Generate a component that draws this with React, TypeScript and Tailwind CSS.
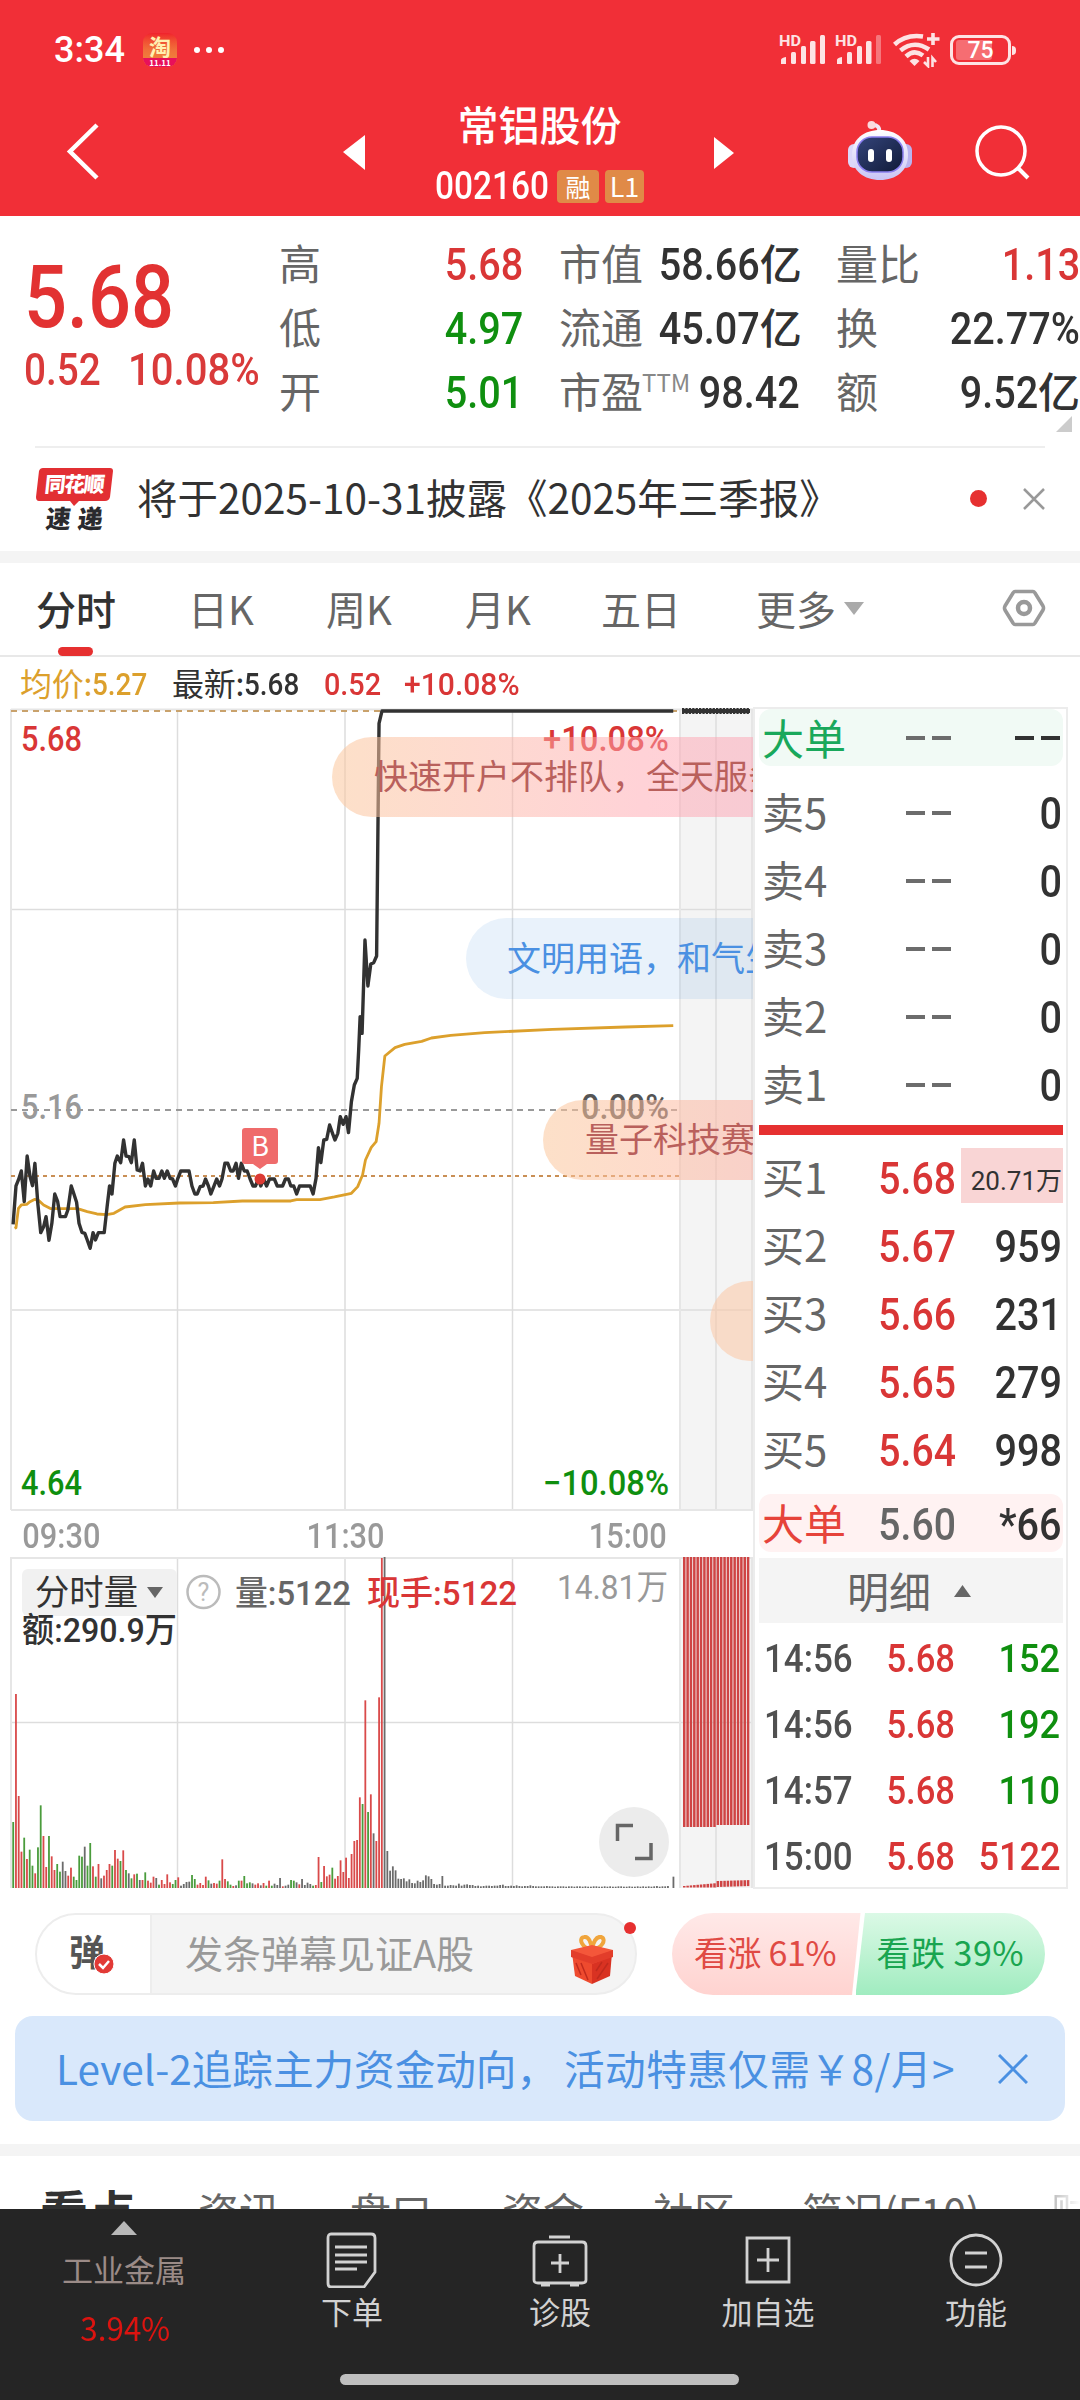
import type { ReactNode } from 'react';
import clsx from 'clsx';

const UP = '#d93636';
const DOWN = '#0f8f0f';

// price and average lines, x: plot units, y: plot units relative to the lower half
const PRICE_LINE =
  '27,493 33,378 38,360 44,333 50,425 56,288 62,350 67,377 72,310 78,430 84,518 90,500 95,470 101,541 107,490 113,402 119,425 124,470 135,470 140,450 147,378 152,400 158,427 163,490 169,517 175,520 180,540 186,565 192,518 197,540 203,518 215,518 221,440 226,378 231,402 237,310 242,288 249,308 255,240 260,288 266,290 271,308 277,240 283,330 289,333 294,310 300,378 305,357 311,378 317,333 322,355 328,355 334,333 339,355 345,333 351,355 356,357 362,378 367,355 373,333 390,333 396,378 402,402 407,402 413,380 419,378 424,357 430,378 435,402 441,380 447,357 453,378 458,357 464,310 470,310 476,333 481,333 487,310 492,355 498,310 504,333 510,333 516,357 522,378 527,378 533,357 538,378 544,357 550,378 556,357 566,357 572,378 583,378 589,357 595,357 600,378 606,378 612,402 618,378 640,378 646,402 652,355 657,263 662,308 668,240 674,238 680,195 686,220 691,240 697,220 702,170 708,193 714,170 719,218 725,125 731,75 737,55 740,-30 743,-130 747,-80 753,-360 759,-222 765,-288 771,-292 777,-312 782,-1010 788,-1047 1389,-1047';

const AVG_LINE =
  '30,505 33,503 38,445 44,435 55,433 62,425 72,418 80,422 90,435 105,446 160,446 180,455 200,462 220,464 235,460 258,441 300,434 370,429 440,428 500,423 600,423 612,419 660,419 690,411 725,400 738,380 748,345 754,300 766,262 776,245 782,190 787,80 794,-12 815,-37 835,-47 870,-56 890,-66 930,-74 1000,-82 1140,-92 1290,-99 1389,-103';

// one entry per minute: r = up, g = down, k = flat
const VOLUME =
  'g198 r582 r276 r109 g151 r87 g115 g67 r44 g122 g248 r156 r63 g156 r95 r54 g72 g49 k79 k51 r37 r61 g34 g24 g97 g94 k124 g67 g135 r65 g34 r72 k29 r37 r54 r72 g67 r114 r88 g81 r113 g54 k44 g29 r41 g43 k24 r24 g47 r22 r16 r34 k30 g10 r24 r12 r41 r17 g12 g24 r32 k7 k12 k18 k19 g39 g27 r10 r15 r9 r34 g23 k13 r15 r13 g22 r86 r27 g20 g10 r6 k8 g22 r22 g36 g14 g17 k14 r10 r14 k8 r15 g7 r22 g7 k13 k9 k30 r5 k7 k10 g24 g22 k17 r11 k27 k9 k16 k12 g7 r9 r93 g18 r66 r35 r40 g61 r28 r36 r83 r48 r91 r30 r102 r141 r144 r272 g252 r563 g228 r281 k164 r141 r572 r990 k993 k111 k52 k65 k53 k28 k27 k29 k20 k26 k15 k14 k22 k18 k23 k38 k35 k27 k12 k10 k12 k36 k7 k7 k9 k8 k7 k13 k7 k10 k11 k9 k9 k6 k7 k5 k6 k7 k7 k6 k7 k7 k9 k10 k6 k6 k7 k6 k8 k6 k5 k6 k6 k8 k6 k5 k5 k5 k5 k6 k5 k5 k4 k5 k5 k5 k4 k5 k5 k4 k5 k5 k4 k5 k4 k4 k5 k5 k4 k4 k5 k4 k5 k4 k4 k5 k5 k4 k4 k5 k4 k4 k5 k4 k5 k4 k5 k4 k5 k6 k4 k5 k5 k6 k0 k34';

const BAR_COLOR: Record<string, string> = { r: '#d94a4a', g: '#4a9c3c', k: '#6b6b6b' };

const sells = ['卖5', '卖4', '卖3', '卖2', '卖1'];
const buys = [
  ['买1', '5.68', '20.71万'],
  ['买2', '5.67', '959'],
  ['买3', '5.66', '231'],
  ['买4', '5.65', '279'],
  ['买5', '5.64', '998'],
];
const trades = [
  { time: '14:56', price: '5.68', vol: '152', up: false },
  { time: '14:56', price: '5.68', vol: '192', up: false },
  { time: '14:57', price: '5.68', vol: '110', up: false },
  { time: '15:00', price: '5.68', vol: '5122', up: true },
];

function Num({ children, className }: { children: ReactNode; className?: string }) {
  return (
    <span className={clsx("inline-block whitespace-pre [font-family:Roboto,'Noto_Sans_CJK_SC',sans-serif] font-medium", className)}>
      {children}
    </span>
  );
}

function Signal({ weak }: { weak?: boolean }) {
  return (
    <svg width="46" height="34" viewBox="0 0 46 34" fill="#fde3e4">
      <text x="0" y="13" fontSize="15" fontWeight="700" fontFamily="Roboto" textLength="22" lengthAdjust="spacingAndGlyphs">HD</text>
      <path d="M2 31 V27 Q2 25 7 24 V31 Z" />
      <rect x="12" y="19" width="5" height="12" rx="1.500" />
      <rect x="22" y="13" width="5" height="18" rx="1.500" />
      <rect x="31" y="8" width="5.500" height="23" rx="1.500" />
      <rect x="41" y="2" width="5" height="29" rx="1.500" opacity={weak ? 0.4 : 1} />
    </svg>
  );
}

function StatusBar() {
  return (
    <div className="flex h-[100px] items-center pl-[54px] pr-[69px] text-white">
      <Num className="w-[89px] text-[36px] leading-none">3:34</Num>
      <div className="flex h-[34px] w-[34px] flex-col items-center rounded-[9px] bg-gradient-to-b from-[#f0202c] via-[#f0703a] to-[#ef8a3c]">
        <span className="h-[25px] text-[22px] font-bold leading-[25px] text-[#fff0b0]">淘</span>
        <span className="h-[9px] w-full rounded-b-[9px] bg-[#e8105a] text-center text-[8px] font-bold leading-[9px]">11.11</span>
      </div>
      <div className="ml-[17px] flex gap-[6px]">
        <i className="size-[6px] rounded-full bg-white" />
        <i className="size-[6px] rounded-full bg-white" />
        <i className="size-[6px] rounded-full bg-white" />
      </div>
      <div className="ml-auto flex items-center">
        <Signal />
        <div className="ml-[10px]"><Signal weak /></div>
        <svg className="ml-[12px]" width="48" height="36" viewBox="0 0 48 36" fill="none" stroke="#fde3e4" strokeWidth="4.6">
          <path d="M1.500 12.500 Q13 2 30 4.500" />
          <path d="M7.500 18.500 Q21 7.500 36 17.500" />
          <path d="M13 24.500 Q21 17 30 23.500" />
          <path d="M21.500 34 L16.500 29 Q21.500 24.500 26.500 29 Z" fill="#fde3e4" stroke="none" />
          <path d="M40 1 V13 M34 7 H46.500" strokeWidth="3.6" />
          <path d="M35 25 V34 L31 30 M39.500 35 V26 L43 30" strokeWidth="2.600" />
        </svg>
        <div className="relative ml-[9px] flex h-[30px] w-[61px] items-center justify-center rounded-[9px] border-[3px] border-[#fde3e4]">
          <div className="absolute bottom-[2px] left-[3px] top-[2px] w-[36px] rounded-[3px] bg-[#f66d72]" />
          <Num className="relative text-[23px] leading-none">75</Num>
          <i className="absolute -right-[8px] h-[9px] w-[4px] rounded-r bg-[#fde3e4]" />
        </div>
      </div>
    </div>
  );
}

function Robot() {
  return (
    <svg width="64" height="62" viewBox="0 0 64 62">
      <defs>
        <linearGradient id="head" x1="0" y1="0" x2="0" y2="1">
          <stop offset="0" stopColor="#fff" />
          <stop offset="1" stopColor="#c9c4f5" />
        </linearGradient>
        <linearGradient id="face" x1="0" y1="0" x2="1" y2="1">
          <stop offset="0" stopColor="#34447a" />
          <stop offset="1" stopColor="#101a38" />
        </linearGradient>
      </defs>
      <path d="M31 12 C32 7 29 5 25 5" fill="none" stroke="#f3e4f4" strokeWidth="4" />
      <circle cx="23.500" cy="5" r="4" fill="#fbd9de" />
      <rect x="0" y="24" width="12" height="24" rx="6" fill="#dcd8fa" />
      <rect x="52" y="24" width="12" height="24" rx="6" fill="#b9b4ef" />
      <path d="M32 10 C48 10 60 19 60 35 C60 51 48 60 32 60 C16 60 4 51 4 35 C4 19 16 10 32 10 Z" fill="url(#head)" />
      <rect x="9" y="17" width="46" height="35" rx="15" fill="url(#face)" stroke="#8b7ff0" strokeWidth="1.500" />
      <rect x="20" y="29" width="6" height="13" rx="3" fill="#fff" />
      <rect x="38" y="29" width="6" height="13" rx="3" fill="#fff" />
    </svg>
  );
}

function NavBar() {
  return (
    <div className="flex h-[116px] items-start text-white">
      <div className="flex w-[343px] pl-[66px] pt-[22px]">
        <svg width="34" height="58" viewBox="0 0 34 58" fill="none" stroke="#fff" strokeWidth="4.5">
          <path d="M31 3 L4 29.500 L31 56" />
        </svg>
      </div>
      <svg className="mt-[34px]" width="22" height="36" viewBox="0 0 22 36" fill="#fff"><path d="M22 1 V36 L0 18 Z" /></svg>
      <div className="flex w-[349px] flex-col items-center">
        <div className="h-[68px] text-[41px] font-medium leading-[46px]">常铝股份</div>
        <div className="flex h-[36px] items-center">
          <Num className="w-[122px] origin-left scale-x-[.88] text-[38px] leading-none">002160</Num>
          <span className="flex h-[33px] w-[42px] items-center justify-center rounded-[4px] bg-[#e08a47] text-[25px] leading-[30px]">融</span>
          <span className="ml-[6px] flex h-[33px] w-[39px] items-center justify-center rounded-[4px] bg-[#e08a47] text-[27px] leading-[30px]">L1</span>
        </div>
      </div>
      <svg className="mt-[36px]" width="20" height="34" viewBox="0 0 20 34" fill="#fff"><path d="M0 1 V33 L20 17 Z" /></svg>
      <div className="ml-[114px] mt-[20px]"><Robot /></div>
      <svg className="ml-[62px] mt-[24px]" width="56" height="58" viewBox="0 0 56 58" fill="none" stroke="#fff" strokeWidth="3.500">
        <circle cx="27" cy="27" r="24" />
        <path d="M44 44 L54 54" strokeWidth="4" />
      </svg>
    </div>
  );
}

function Stat({ label, sup, value, unit, color }: { label: string; sup?: string; value: string; unit?: string; color?: string }) {
  return (
    <div className="flex h-[64px] items-center whitespace-nowrap text-[42px] leading-[60px]">
      <span className="relative -left-[2px] -top-[2px] text-[#666]">{label}</span>
      {sup && <span className="-ml-[3px] mb-[20px] w-[40px] text-[24px] leading-none text-[#888]">{sup}</span>}
      <span className={clsx('ml-auto flex items-center', color ?? 'text-[#323232]')}>
        <Num className="origin-right scale-x-[.88] text-[45px] leading-none">{value}</Num>
        {unit && <span className="relative -top-[2px] font-medium">{unit}</span>}
      </span>
    </div>
  );
}

function Quote() {
  return (
    <div className="flex h-[230px] shrink-0 pt-[16px]">
      <div className="w-[281px] shrink-0 pl-[24px] text-[#e23232]">
        <Num className="mt-[21px] block origin-left scale-x-[.86] text-[88px] leading-[88px]">5.68</Num>
        <div className="mt-[7px] flex text-[#d93a3a]">
          <Num className="w-[104px] origin-left scale-x-[.88] text-[44px] leading-[44px]">0.52</Num>
          <Num className="origin-left scale-x-[.91] text-[44px] leading-[44px]">10.08%</Num>
        </div>
      </div>
      <div className="grid h-[192px] grid-cols-[242px_239px_242px] gap-x-[38px]">
        <Stat label="高" value="5.68" color="text-[#d93636]" />
        <Stat label="市值" value="58.66" unit="亿" />
        <Stat label="量比" value="1.13" color="text-[#d93636]" />
        <Stat label="低" value="4.97" color="text-[#0f8f0f]" />
        <Stat label="流通" value="45.07" unit="亿" />
        <Stat label="换" value="22.77%" />
        <Stat label="开" value="5.01" color="text-[#0f8f0f]" />
        <Stat label="市盈" sup="TTM" value="98.42" />
        <Stat label="额" value="9.52" unit="亿" />
      </div>
      <svg className="absolute right-[8px] top-[416px]" width="16" height="16"><path d="M16 0 V16 H0 Z" fill="#ccc" /></svg>
    </div>
  );
}

function Notice() {
  return (
    <div className="mx-[35px] flex h-[105px] shrink-0 items-center border-t-2 border-[#eee] pb-[2px]">
      <svg className="overflow-visible" width="80" height="66" viewBox="35 465 80 66" fontFamily="Noto Sans CJK SC" fontWeight="900">
        <path d="M43 467 H110 Q113 467 113 470 L110 496 Q109 500 105 500 H79 L74 505 L70 500 H39 Q36 500 36 496 L39 470 Q40 467 43 467 Z" fill="#e22f33" />
        <text x="0" y="0" transform="translate(44 491) skewX(-6)" fontSize="21" fill="#fff" textLength="60">同花顺</text>
        <text x="0" y="0" transform="translate(45 527) skewX(-6)" fontSize="25" fill="#2a2a2e" textLength="57">速递</text>
      </svg>
      <span className="relative -top-[2px] ml-[22px] whitespace-nowrap text-[40.500px] leading-[60px] text-[#323232]">将于2025-10-31披露《2025年三季报》</span>
      <i className="ml-auto size-[17px] rounded-full bg-[#e63030]" />
      <svg className="ml-[36px]" width="22" height="22" stroke="#999" strokeWidth="2.500"><path d="M1 1 L21 21 M21 1 L1 21" /></svg>
    </div>
  );
}

function PeriodTabs() {
  return (
    <div className="relative flex h-[94px] shrink-0 items-center border-b-2 border-[#e8e8e8] pb-[2px] text-[40px] leading-[60px] text-[#666]">
      <span className="w-[157px] pl-[36px] font-medium text-[#323232]">分时</span>
      <span className="ml-[31px] w-[138px]">日K</span>
      <span className="w-[139px]">周K</span>
      <span className="w-[136px]">月K</span>
      <span className="w-[155px]">五日</span>
      <span>更多</span>
      <svg className="ml-[8px]" width="20" height="13"><path d="M0 0 H20 L10 13 Z" fill="#aaa" /></svg>
      <svg className="ml-auto mr-[34px]" width="44" height="38" viewBox="0 0 44 38" fill="none" stroke="#999" strokeWidth="3.600">
        <path d="M13 2.500 H31 Q32 2.500 33 4 L41 17 Q42 19 41 21 L33 34 Q32 35.500 31 35.500 H13 Q12 35.500 11 34 L3 21 Q2 19 3 17 L11 4 Q12 2.500 13 2.500 Z" />
        <circle cx="22" cy="19" r="6" strokeWidth="4.500" />
      </svg>
      <i className="absolute -bottom-px left-[58px] h-[9px] w-[35px] rounded-full bg-[#e63030]" />
    </div>
  );
}

function Legend({ label, value, className }: { label: string; value: string; className: string }) {
  return (
    <span className={clsx('flex w-[152px] items-center', className)}>
      <span className="relative -top-[2px] w-[72px] whitespace-nowrap tracking-[-.3px]">{label}</span>
      <Num className="origin-left scale-x-[.87] leading-none">{value}</Num>
    </span>
  );
}

function Label({ x, y, w, fill, size = 35, weight = 500, children }: { x: number; y: number; w: number; fill: string; size?: number; weight?: number; children: string }) {
  return (
    <text x={x} y={y} textLength={w} lengthAdjust="spacingAndGlyphs" fontSize={size} fill={fill} fontWeight={weight} fontFamily="Roboto, 'Noto Sans CJK SC', sans-serif">
      {children}
    </text>
  );
}

function PriceChart() {
  return (
    <svg className="block" width="743" height="803" viewBox="10 708 743 803">
      <rect x="679" y="709" width="74" height="801" fill="#f4f4f4" />
      <g stroke="#ddd" strokeWidth="1.500" fill="none">
        <path d="M177.500 709 V1510 M345 709 V1510 M512.500 709 V1510 M716 709 V1510 M11 909.500 H753 M11 1310 H753" />
        <path d="M11 709 V1510 M680 709 V1510 M752 709 V1510 M11 709.500 H753 M11 1510 H753" stroke="#e6e6e6" strokeWidth="2" />
      </g>
      <path d="M11 711 H679" stroke="#c9a26c" strokeWidth="2" strokeDasharray="6 5" />
      <path d="M11 1110 H679" stroke="#999" strokeWidth="2" strokeDasharray="6 5" />
      <path d="M11 1176 H679" stroke="#c98f55" strokeWidth="2" strokeDasharray="4 4" />
      <g fill="none" strokeLinejoin="round" transform="translate(0 1060) scale(.4847 .3333)">
        <polyline points={AVG_LINE} stroke="#dca02c" strokeWidth="2.800" vectorEffect="non-scaling-stroke" />
        <polyline points={PRICE_LINE} stroke="#323232" strokeWidth="3.400" vectorEffect="non-scaling-stroke" />
      </g>
      <path d="M682 711 H750" stroke="#323232" strokeWidth="4" />
      <path d="M682 711 H750" stroke="#323232" strokeWidth="6" strokeDasharray="2.300 1.100" />

      <Label x={21} y={751} w={61} fill={UP}>5.68</Label>
      <Label x={543} y={751} w={126} fill={UP}>+10.08%</Label>
      <Label x={21} y={1119} w={61} fill="#999">5.16</Label>
      <Label x={581} y={1119} w={88} fill="#555">0.00%</Label>
      <Label x={21} y={1495} w={61} fill={DOWN}>4.64</Label>
      <Label x={543} y={1495} w={126} fill={DOWN}>−10.08%</Label>

      <circle cx="260" cy="1179" r="5.500" fill="#dc3a34" />
      <path d="M245 1128 H275 Q278 1128 278 1131 V1161 Q278 1164 275 1164 H267 L260 1169 L253 1164 H245 Q242 1164 242 1161 V1131 Q242 1128 245 1128 Z" fill="#ef6b6b" />
      <text x="260" y="1156" fontSize="27" fill="#fff" textAnchor="middle" fontFamily="Noto Sans CJK SC">B</text>
    </svg>
  );
}

function VolumeChart() {
  return (
    <svg className="block" width="743" height="334" viewBox="10 1556 743 334">
      <rect x="679" y="1557" width="74" height="331" fill="#f4f4f4" />
      <g stroke="#ddd" strokeWidth="1.500" fill="none">
        <path d="M177.500 1557 V1888 M345 1557 V1888 M512.500 1557 V1888 M716 1557 V1888 M11 1722.500 H753" />
        <path d="M11 1557 V1888 M680 1557 V1888 M752 1557 V1888 M11 1558 H753" stroke="#e6e6e6" strokeWidth="2" />
      </g>
      {VOLUME.split(' ').map((bar, i) => {
        const h = Number(bar.slice(1)) / 3;
        return <rect key={i} x={12.3 + i * 2.751} y={1888 - h} width="1.800" height={h} fill={BAR_COLOR[bar[0]]} />;
      })}
      {/* after-hours fixed price session */}
      {Array.from({ length: 20 }, (_, i) => (
        <g key={i} fill="#cf4444">
          <rect x={683 + i * 3.36} y="1557" width="2.500" height={i < 10 ? 270 : 268} />
          <rect x={683 + i * 3.36} y={i < 10 ? 1886 - i * 0.3 : 1881 - (i - 10) * 0.1} width="2.500" height={i < 10 ? 1.5 + i * 0.3 : 6} />
        </g>
      ))}

      <rect x="22" y="1569" width="155" height="47" rx="6" fill="#f1f1f1" />
      <Label x={35} y={1605} w={103} size={35} weight={400} fill="#323232">分时量</Label>
      <path d="M147 1587 H163 L155 1598 Z" fill="#666" />
      <circle cx="203.500" cy="1592" r="16" fill="none" stroke="#bbb" strokeWidth="2.500" />
      <text x="203.500" y="1601" fontSize="25" fill="#bbb" textAnchor="middle" fontFamily="Roboto">?</text>
      <Label x={235} y={1605} w={116} size={34} fill="#666">量:5122</Label>
      <Label x={367} y={1605} w={150} size={34} fill={UP}>现手:5122</Label>
      <Label x={557} y={1599} w={111} size={34} weight={400} fill="#999">14.81万</Label>
      <Label x={22} y={1642} w={155} size={34} fill="#323232">额:290.9万</Label>

      <circle cx="634" cy="1842" r="35" fill="#ececec" />
      <path d="M617.500 1841 V1825.500 H633 M635 1858.500 H651 V1843" fill="none" stroke="#666" strokeWidth="3.500" />
    </svg>
  );
}

function Bullets() {
  return (
    <div className="pointer-events-none absolute inset-0 overflow-hidden whitespace-nowrap text-[34px] leading-[50px]">
      <div className="absolute left-[322px] top-[29px] h-[80px] w-[620px] rounded-full bg-gradient-to-r from-[#fbc79c]/55 via-[#ffa5af]/50 to-[#f79ab8]/50 pl-[42px] pt-[13px] text-[#b9605c]">快速开户不排队，全天服务</div>
      <div className="absolute left-[456px] top-[210px] h-[81px] w-[500px] rounded-full bg-[#4a90e2]/12 pl-[41px] pt-[14px] text-[#4a90e2]">文明用语，和气生财</div>
      <div className="absolute left-[533px] top-[392px] h-[80px] w-[400px] rounded-full bg-gradient-to-r from-[#fbc79c]/55 to-[#ff9aa5]/50 pl-[42px] pt-[13px] text-[#b9605c]">量子科技赛</div>
      <div className="absolute left-[700px] top-[573px] h-[80px] w-[200px] rounded-full bg-[#fbc7a4]/55" />
    </div>
  );
}

function BookRow({ label, price, qty, className }: { label: string; price: string; qty: string; className?: string }) {
  const dash = price === '--';
  const large = qty.endsWith('万');
  return (
    <div className={clsx('flex h-[68px] items-center pl-[3px] text-[42px] leading-[60px] text-[#666]', className)}>
      <span className="relative -top-px w-[84px]">{label}</span>
      {dash ? (
        <span className="flex w-[108px] justify-end gap-[7px] pr-[3px] pt-px">
          <i className="h-[4px] w-[19px] bg-[#6c6c6c]" />
          <i className="h-[4px] w-[19px] bg-[#6c6c6c]" />
        </span>
      ) : (
        <Num className={clsx('w-[110px] origin-right scale-x-[.89] pt-[4px] text-right text-[44px] leading-none', label !== '大单' && 'text-[#d93636]')}>{price}</Num>
      )}
      {qty === '--' ? (
        <span className="ml-auto flex gap-[7px] pr-[3px] pt-px">
          <i className="h-[4px] w-[19px] bg-[#323232]" />
          <i className="h-[4px] w-[19px] bg-[#323232]" />
        </span>
      ) : large ? (
        <span className="-mt-[4px] ml-auto flex h-[55px] w-[102px] items-center justify-end bg-[#f9d5d5] pr-px pt-[12px]">
          <Num className="text-[26px] leading-none !font-normal text-[#323232]">{qty}</Num>
        </span>
      ) : (
        <Num className="ml-auto origin-right scale-x-[.9] pr-px pt-[4px] text-[44px] leading-none text-[#323232]">{qty}</Num>
      )}
    </div>
  );
}

function OrderBook() {
  return (
    <div className="h-[1182px] w-[315px] border-2 border-[#ececec] pl-[4px] pr-[3px]">
      <BookRow label="大单" price="--" qty="--" className="!h-[57px] rounded-[12px] bg-[#f1faf5] [&>span:first-child]:text-[#19a85b]" />
      <div className="pt-[12px]">
        {sells.map((s) => <BookRow key={s} label={s} price="--" qty="0" />)}
      </div>
      <div className="mt-[7px] h-[10px] bg-[#e63030]" />
      <div className="pt-[8px]">
        {buys.map(([l, p, q]) => <BookRow key={l} label={l} price={p} qty={q} />)}
      </div>
      <BookRow label="大单" price="5.60" qty="*66" className="mt-[11px] !h-[58px] rounded-[12px] bg-[#fff2f2] [&>span:first-child]:text-[#e6433a]" />
      <div className="mt-[6px] flex h-[65px] items-center bg-[#f4f4f4] pl-[88px] text-[42px] leading-[60px] text-[#666]">
        <span className="relative -top-px">明细</span>
        <svg className="ml-[23px]" width="17" height="12"><path d="M0 12 H17 L8.500 0 Z" fill="#666" /></svg>
      </div>
      <div className="pt-[3px]">
        {trades.map((t, i) => (
          <div key={i} className="flex h-[66px] items-center pl-[5px] text-[38px] leading-none">
            <Num className="w-[94px] origin-left scale-x-[.92] text-[#505050]">{t.time}</Num>
            <Num className="w-[97px] origin-right scale-x-[.91] text-right text-[#d93636]">{t.price}</Num>
            <Num className={clsx('ml-auto origin-right scale-x-[.95] pr-[3px]', t.up ? 'text-[#d93636]' : 'text-[#0f8f0f]')}>{t.vol}</Num>
          </div>
        ))}
      </div>
    </div>
  );
}

function Gift() {
  return (
    <svg width="46" height="50" viewBox="0 0 46 50">
      <path d="M23 14 C13 14 9 3 15 2 C20 1 22 8 23 14 C24 8 27 1 32 2 C38 4 33 14 23 14 Z" fill="none" stroke="#f0a53c" strokeWidth="4" />
      <path d="M3 18 L23 26 V49 L6 41 Z" fill="#ee4a2e" />
      <path d="M43 18 L23 26 V49 L41 41 Z" fill="#d93222" />
      <path d="M2 15 L23 10 L44 15 V21 L23 29 L2 21 Z" fill="#f4573a" />
      <path d="M2 15 L23 22 L44 15 V22 L23 29 L2 22 Z" fill="#e23d2a" />
      <path d="M28 44 L39 28 M27 36 L33 27 M12 40 L7 28 M19 45 L12 28" stroke="#c02a1d" strokeWidth="1.500" />
    </svg>
  );
}

function CommentBar() {
  return (
    <div className="mt-[23px] flex h-[82px] shrink-0 pl-[35px]">
      <div className="relative flex h-[82px] w-[602px] items-center overflow-visible rounded-full border-2 border-[#ededed] bg-[#f4f4f4]">
        <div className="relative flex h-full w-[115px] items-center rounded-l-full border-r-2 border-[#ededed] bg-white pl-[32px]">
          <span className="relative -top-[4px] text-[36px] font-bold leading-[50px] text-[#555]">弹</span>
          <svg className="absolute left-[56px] top-[38px]" width="22" height="22" viewBox="0 0 22 22">
            <circle cx="11" cy="11" r="10" fill="#e23a36" stroke="#fff" />
            <path d="M6 11 L10 15 L16 8" fill="none" stroke="#fff" strokeWidth="2.500" />
          </svg>
        </div>
        <span className="relative -top-[2px] ml-[33px] text-[38px] leading-[56px] text-[#999]">发条弹幕见证A股</span>
        <div className="ml-auto mr-[20px] mt-[12px]"><Gift /></div>
        <i className="absolute -right-px top-[7px] size-[12px] rounded-full bg-[#e63030]" />
      </div>
      <div className="ml-[35px] flex h-[82px] w-[373px] overflow-hidden rounded-full text-[34px] leading-[78px]">
        <div className="w-[189px] whitespace-pre bg-gradient-to-b from-[#ffe9e8] to-[#ffd3d0] pl-[22px] tracking-[-.4px] text-[#e04a44] [clip-path:polygon(0_0,100%_0,95.500%_100%,0_100%)]">看涨 61%</div>
        <div className="-ml-[5px] w-[190px] whitespace-pre bg-gradient-to-b from-[#dbf9e6] to-[#a0ecc0] pl-[21px] tracking-[.5px] text-[#19a550] [clip-path:polygon(5%_0,100%_0,100%_100%,0_100%)]">看跌 39%</div>
      </div>
    </div>
  );
}

const navItems: { label: string; icon: ReactNode }[] = [
  {
    label: '下单',
    icon: <path d="M7 2 H47 Q51 2 51 6 V40 L40 55 H7 Q4 55 4 51 V6 Q4 2 7 2 Z M11 15 H43 M11 23 H43 M11 30 H43 M11 37 H33" />,
  },
  {
    label: '诊股',
    icon: <path d="M6 10 H50 Q54 10 54 14 V48 Q54 51 50 51 H6 Q2 51 2 48 V14 Q2 10 6 10 Z M17 5 H38 M28 22 V41 M19 31 H37 M9 53 H18 M38 53 H47" />,
  },
  {
    label: '加自选',
    icon: <path d="M7 6 H49 V50 H7 Z M28 16 V40 M17 28 H39" />,
  },
  {
    label: '功能',
    icon: <path d="M28 3 A25 25 0 1 1 27.900 3 Z M17 21 H39 M17 35 H39" />,
  },
];

function BottomBar() {
  return (
    <div className="relative flex h-[191px] shrink-0 bg-[#252525] text-[31px] leading-[44px] text-[#d2d2d2]">
      <div className="flex w-[248px] flex-col items-center pt-[12px]">
        <svg width="26" height="14"><path d="M13 0 L26 14 H0 Z" fill="#b8b8b8" /></svg>
        <span className="mt-[12px] text-[#9b8b87]">工业金属</span>
        <span className="ml-[3px] mt-[14px] origin-center scale-x-[.95] text-[33px] text-[#dc1410]">3.94%</span>
      </div>
      {navItems.map((item) => (
        <div key={item.label} className="flex w-[208px] flex-col items-center pt-[23px]">
          <svg width="56" height="56" viewBox="0 0 56 56" fill="none" stroke="#d2d2d2" strokeWidth="2.800">{item.icon}</svg>
          <span className="mt-px">{item.label}</span>
        </div>
      ))}
      <i className="absolute bottom-[15px] left-[340px] h-[11px] w-[399px] rounded-full bg-[#bfbfbf]" />
    </div>
  );
}

export default function App() {
  return (
    <div className="relative flex h-[2400px] w-[1080px] flex-col overflow-hidden bg-white [font-family:'Noto_Sans_CJK_SC',sans-serif]">
      <header className="h-[216px] shrink-0 bg-[#f12f37]">
        <StatusBar />
        <NavBar />
      </header>
      <Quote />
      <Notice />
      <div className="h-[12px] shrink-0 bg-[#f4f4f4]" />
      <PeriodTabs />
      <main className="flex h-[1233px] shrink-0">
        <div className="w-[753px] pl-[10px]">
          <div className="flex h-[51px] items-center pl-[10px] pt-[3px] text-[32px] leading-[48px]">
            <Legend label="均价:" value="5.27" className="text-[#dca02c]" />
            <Legend label="最新:" value="5.68" className="text-[#323232]" />
            <Num className="w-[80px] origin-left scale-x-[.9] leading-none text-[#d93636]">0.52</Num>
            <Num className="origin-left scale-x-[.94] leading-none text-[#d93636]">+10.08%</Num>
          </div>
          <div className="relative">
            <PriceChart />
            <Bullets />
          </div>
          <div className="flex h-[45px] items-center pt-[5px] text-[35px] text-[#999]">
            <Num className="w-[286px] origin-left scale-x-[.88] pl-[14px] leading-none">09:30</Num>
            <Num className="w-[87px] origin-right scale-x-[.88] text-right leading-none">11:30</Num>
            <Num className="ml-auto mr-[86px] origin-right scale-x-[.88] leading-none">15:00</Num>
          </div>
          <VolumeChart />
        </div>
        <div className="pt-[50px]">
          <OrderBook />
        </div>
      </main>
      <CommentBar />
      <div className="mx-[15px] mt-[21px] flex h-[105px] shrink-0 items-center rounded-[18px] bg-[#d9e8fb] pl-[41px] pr-[37px] text-[#4a90e2]">
        <span className="relative -top-px whitespace-nowrap text-[40.600px] leading-[60px]">Level-2追踪主力资金动向，</span>
        <span className="relative -top-px ml-[7px] whitespace-nowrap text-[40.600px] leading-[60px] tracking-[.5px]">活动特惠仅需￥8/月&gt;</span>
        <svg className="ml-auto" width="30" height="30" stroke="#4a90e2" strokeWidth="3"><path d="M1 1 L29 29 M29 1 L1 29" /></svg>
      </div>
      <div className="mt-[23px] h-[12px] shrink-0 bg-[#f4f4f4]" />
      <div className="flex h-[53px] shrink-0 overflow-hidden whitespace-nowrap pt-[23px] text-[41px] leading-[62px] text-[#666]">
        <span className="w-[157px] shrink-0 pl-[40px] text-[48px] font-bold text-[#323232]">看点</span>
        <span className="ml-[41px] w-[152px] shrink-0">资讯</span>
        <span className="w-[152px] shrink-0">盘口</span>
        <span className="w-[151px] shrink-0">资金</span>
        <span className="w-[149px] shrink-0">社区</span>
        <span className="w-[249px] shrink-0">简况(F10)</span>
        <span className="w-[29px] shrink-0 overflow-hidden bg-gradient-to-r from-[#bbb] to-white bg-clip-text text-transparent">财务</span>
      </div>
      <BottomBar />
    </div>
  );
}
